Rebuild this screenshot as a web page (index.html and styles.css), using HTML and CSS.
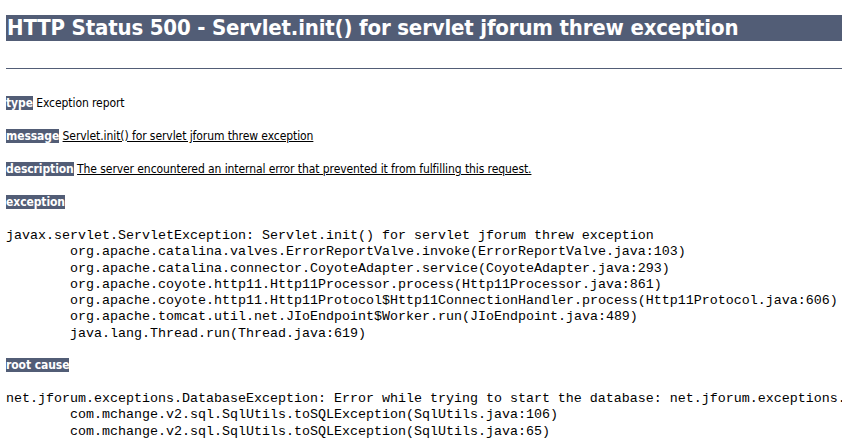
FILE: index.html
```html
<!DOCTYPE html>
<html>
<head>
<meta charset="utf-8">
<title>Apache Tomcat - Error report</title>
<link rel="stylesheet" href="styles.css">
</head>
<body>
<h1 class="title">HTTP Status 500 - Servlet.init() for servlet jforum threw exception</h1>
<hr class="rule">
<p class="row row-first"><b class="label">type</b> Exception report</p>
<p class="row"><b class="label">message</b> <u>Servlet.init() for servlet jforum threw exception</u></p>
<p class="row"><b class="label">description</b> <u>The server encountered an internal error that prevented it from fulfilling this request.</u></p>
<p class="row"><b class="label">exception</b></p>
<pre class="trace">javax.servlet.ServletException: Servlet.init() for servlet jforum threw exception
	org.apache.catalina.valves.ErrorReportValve.invoke(ErrorReportValve.java:103)
	org.apache.catalina.connector.CoyoteAdapter.service(CoyoteAdapter.java:293)
	org.apache.coyote.http11.Http11Processor.process(Http11Processor.java:861)
	org.apache.coyote.http11.Http11Protocol$Http11ConnectionHandler.process(Http11Protocol.java:606)
	org.apache.tomcat.util.net.JIoEndpoint$Worker.run(JIoEndpoint.java:489)
	java.lang.Thread.run(Thread.java:619)
</pre>
<p class="row row-cause"><b class="label">root cause</b></p>
<pre class="trace">net.jforum.exceptions.DatabaseException: Error while trying to start the database: net.jforum.exceptions.
	com.mchange.v2.sql.SqlUtils.toSQLException(SqlUtils.java:106)
	com.mchange.v2.sql.SqlUtils.toSQLException(SqlUtils.java:65)
</pre>
</body>
</html>
```
FILE: styles.css
```css
html {
  overflow: hidden;
}

body {
  margin: 0;
  padding: 15px 0 0 6px;
  background: #ffffff;
  color: #000000;
  font-family: "DejaVu Sans Condensed", "DejaVu Sans", Tahoma, Arial, sans-serif;
  font-stretch: condensed;
}

.title {
  margin: 0;
  height: 26px;
  line-height: 26px;
  padding-left: 1px;
  font-size: 22px;
  font-weight: bold;
  letter-spacing: -0.17px;
  color: #ffffff;
  background-color: #525d76;
  white-space: nowrap;
}

.rule {
  margin: 27px 0 0 0;
  height: 0;
  border: 0;
  border-top: 1px solid #525d76;
}

.row {
  margin: 18px 0 0 0;
  font-size: 12px;
  line-height: 15px;
  letter-spacing: -0.08px;
  white-space: nowrap;
}

.row-first {
  margin-top: 27px;
}

.row-cause {
  margin-top: 16px;
}

.label {
  color: #ffffff;
  background-color: #525d76;
  font-weight: bold;
}

.trace {
  margin: 18px 0 0 0;
  font-family: "Liberation Mono", "Courier New", monospace;
  font-size: 13.33px;
  line-height: 16.3px;
  tab-size: 8;
  white-space: pre;
}
```
